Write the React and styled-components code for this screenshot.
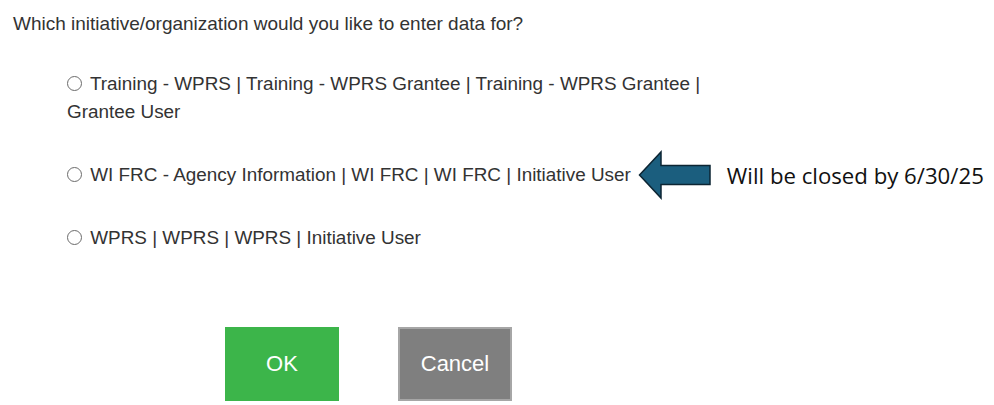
import React, { useState } from 'react';
import styled, { createGlobalStyle } from 'styled-components';

const options = [
  { id: 'training', label: 'Training - WPRS | Training - WPRS Grantee | Training - WPRS Grantee | Grantee User' },
  { id: 'wifrc', label: 'WI FRC - Agency Information | WI FRC | WI FRC | Initiative User', note: 'Will be closed by 6/30/25' },
  { id: 'wprs', label: 'WPRS | WPRS | WPRS | Initiative User' },
];

const App = () => {
  const [selected, setSelected] = useState('');

  return (
    <>
      <GlobalStyle />
      <Page>
        <Question>Which initiative/organization would you like to enter data for?</Question>
        <OptionList>
          {options.map((opt) => (
            <OptionRow key={opt.id}>
              <OptionLabel>
                <Radio
                  type="radio"
                  name="initiative"
                  checked={selected === opt.id}
                  onChange={() => setSelected(opt.id)}
                />{' '}
                {opt.label}
              </OptionLabel>
              {opt.note && (
                <Callout>
                  <svg width="74" height="50" viewBox="0 0 74 50">
                    <path
                      d="M1.5 25 L23 2 L23 15.5 L72 15.5 L72 34.5 L23 34.5 L23 48 Z"
                      fill="#1b5e7e"
                      stroke="#0c2533"
                      strokeWidth="1.5"
                      strokeLinejoin="miter"
                    />
                  </svg>
                  <Note>{opt.note}</Note>
                </Callout>
              )}
            </OptionRow>
          ))}
        </OptionList>
        <Buttons>
          <Button $variant="ok">OK</Button>
          <Button $variant="cancel">Cancel</Button>
        </Buttons>
      </Page>
    </>
  );
};

export default App;

const GlobalStyle = createGlobalStyle`
  body {
    margin: 0;
    background: #fff;
    font-family: "Liberation Sans", Arial, sans-serif;
    color: #333;
  }
`;

const Page = styled.div`
  width: 994px;
  height: 405px;
  padding: 12px 0 0 13px;
  box-sizing: border-box;
  overflow: hidden;
`;

const Question = styled.div`
  font-size: 19px;
  line-height: 24px;
  color: #333;
`;

const OptionList = styled.div`
  display: flex;
  flex-direction: column;
  gap: 24px;
  margin-top: 34px;
  padding-left: 54px;
`;

const OptionRow = styled.div`
  display: flex;
  align-items: center;
`;

const OptionLabel = styled.label`
  font-size: 18.9px;
  line-height: 28px;
  color: #333;
  max-width: 650px;
`;

const Radio = styled.input`
  appearance: none;
  box-sizing: border-box;
  width: 15px;
  height: 15px;
  margin: 0 3px 0 0;
  border: 1px solid #6b6b6b;
  border-radius: 50%;
  vertical-align: -1px;
  background: #fff;

  &:checked {
    background: radial-gradient(circle, #333 0 3px, #fff 3.5px);
  }
`;

const Callout = styled.div`
  display: flex;
  align-items: center;
  margin-left: 7px;
`;

const Note = styled.span`
  margin-left: 15px;
  font-family: "Open Sans", sans-serif;
  font-size: 22.2px;
  color: #111;
`;

const Buttons = styled.div`
  display: flex;
  gap: 59px;
  margin-top: 75px;
  padding-left: 212px;
`;

const Button = styled.button`
  width: 114px;
  height: 74px;
  font-family: "Liberation Sans", Arial, sans-serif;
  font-size: 22px;
  color: #fff;
  border: ${(p) => (p.$variant === 'ok' ? 'none' : '2px solid #a6a6a6')};
  background: ${(p) => (p.$variant === 'ok' ? '#3cb54a' : '#7f7f7f')};
  cursor: pointer;
`;
